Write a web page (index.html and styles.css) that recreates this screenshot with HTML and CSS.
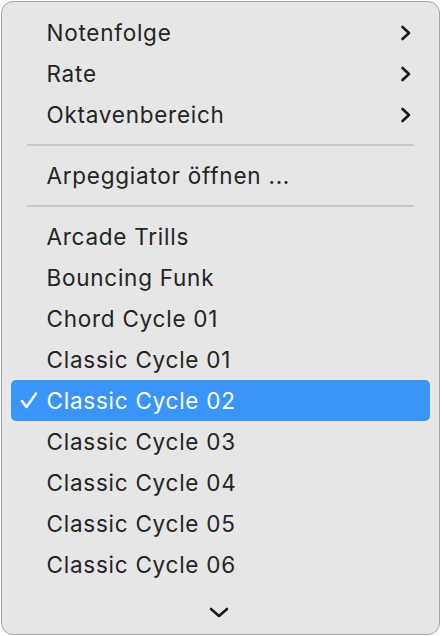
FILE: index.html
```html
<!DOCTYPE html>
<html lang="de">
<head>
    <meta charset="UTF-8">
    <meta name="viewport" content="width=device-width, initial-scale=1.0">
    <title>Arpeggiator Menü</title>
    <link rel="stylesheet" href="styles.css">
</head>
<body>
    <div class="menu">
        <div class="item">
            <span class="label">Notenfolge</span>
            <svg class="submenu" viewBox="0 0 12 16"><path d="M2.5 2 L9 8 L2.5 14"/></svg>
        </div>
        <div class="item">
            <span class="label">Rate</span>
            <svg class="submenu" viewBox="0 0 12 16"><path d="M2.5 2 L9 8 L2.5 14"/></svg>
        </div>
        <div class="item">
            <span class="label">Oktavenbereich</span>
            <svg class="submenu" viewBox="0 0 12 16"><path d="M2.5 2 L9 8 L2.5 14"/></svg>
        </div>

        <div class="separator"></div>

        <div class="item">
            <span class="label">Arpeggiator öffnen ...</span>
        </div>

        <div class="separator"></div>

        <div class="item"><span class="label">Arcade Trills</span></div>
        <div class="item"><span class="label">Bouncing Funk</span></div>
        <div class="item"><span class="label">Chord Cycle 01</span></div>
        <div class="item"><span class="label">Classic Cycle 01</span></div>
        <div class="item selected">
            <svg class="check" viewBox="0 0 18 18"><path d="M2 10 L6.5 16 L16 2.5"/></svg>
            <span class="label">Classic Cycle 02</span>
        </div>
        <div class="item"><span class="label">Classic Cycle 03</span></div>
        <div class="item"><span class="label">Classic Cycle 04</span></div>
        <div class="item"><span class="label">Classic Cycle 05</span></div>
        <div class="item"><span class="label">Classic Cycle 06</span></div>

        <div class="more">
            <svg class="scroll-down" viewBox="0 0 20 11"><path d="M2 2 L10 9 L18 2"/></svg>
        </div>
    </div>
</body>
</html>
```

FILE: styles.css
```css
* {
    box-sizing: border-box;
}

body {
    margin: 0;
    background: #ffffff;
    font-family: 'Inter', 'Roboto', sans-serif;
    color: #242424;
}

.menu {
    margin: 1px 0 0 1px;
    width: 439px;
    height: 634px;
    padding: 10px 9px 0 9px;
    background: #e6e6e6;
    border: 1.5px solid #a6a6a6;
    border-radius: 12px;
    display: flex;
    flex-direction: column;
    overflow: hidden;
}

.item {
    position: relative;
    flex-shrink: 0;
    height: 41px;
    display: flex;
    align-items: center;
    padding-left: 35.5px;
    padding-right: 18px;
    font-size: 22.5px;
    letter-spacing: 0.75px;
    border-radius: 5px;
}

.item .label {
    flex: 1;
}

.item.selected {
    background: #3a95fb;
    color: #ffffff;
}

.submenu {
    width: 12px;
    height: 16px;
    fill: none;
    stroke: #1c1c1c;
    stroke-width: 2.6;
    stroke-linecap: round;
    stroke-linejoin: round;
}

.check {
    position: absolute;
    left: 8.5px;
    top: 10.5px;
    width: 18px;
    height: 18px;
    fill: none;
    stroke: #ffffff;
    stroke-width: 2.5;
    stroke-linecap: round;
    stroke-linejoin: round;
}

.separator {
    flex-shrink: 0;
    height: 1.5px;
    margin: 9px 16px 9.5px 16px;
    background: #c8c8c8;
}

.more {
    display: flex;
    justify-content: center;
    padding: 22px 4px 0 0;
}

.scroll-down {
    width: 20px;
    height: 11px;
    fill: none;
    stroke: #1c1c1c;
    stroke-width: 2.6;
    stroke-linecap: round;
    stroke-linejoin: round;
}
```
